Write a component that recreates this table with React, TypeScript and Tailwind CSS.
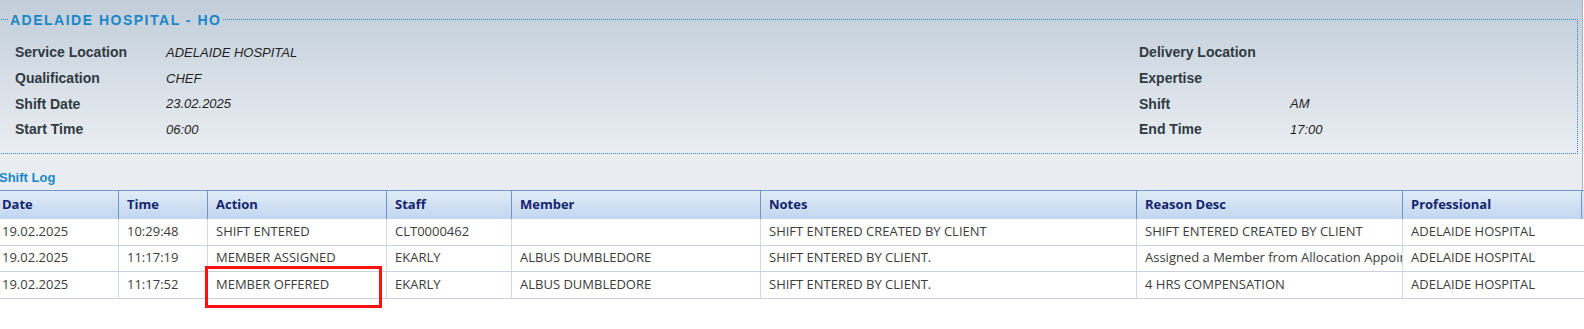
import React from "react";

const cols = [
  { name: "Date", w: "w-[125px]" },
  { name: "Time", w: "w-[89px]" },
  { name: "Action", w: "w-[179px]" },
  { name: "Staff", w: "w-[125px]" },
  { name: "Member", w: "w-[249px]" },
  { name: "Notes", w: "w-[376px]" },
  { name: "Reason Desc", w: "w-[266px]" },
  { name: "Professional", w: "w-[179px]" },
];

const rows = [
  ["19.02.2025", "10:29:48", "SHIFT ENTERED", "CLT0000462", "", "SHIFT ENTERED CREATED BY CLIENT", "SHIFT ENTERED CREATED BY CLIENT", "ADELAIDE HOSPITAL"],
  ["19.02.2025", "11:17:19", "MEMBER ASSIGNED", "EKARLY", "ALBUS DUMBLEDORE", "SHIFT ENTERED BY CLIENT.", "Assigned a Member from Allocation Appointment", "ADELAIDE HOSPITAL"],
  ["19.02.2025", "11:17:52", "MEMBER OFFERED", "EKARLY", "ALBUS DUMBLEDORE", "SHIFT ENTERED BY CLIENT.", "4 HRS COMPENSATION", "ADELAIDE HOSPITAL"],
];

const details: [string, string, string, string][] = [
  ["Service Location", "ADELAIDE HOSPITAL", "Delivery Location", ""],
  ["Qualification", "CHEF", "Expertise", ""],
  ["Shift Date", "23.02.2025", "Shift", "AM"],
  ["Start Time", "06:00", "End Time", "17:00"],
];

export default function App() {
  return (
    <div className="relative w-[1584px] h-[329px] overflow-hidden bg-white">
      <div className="ml-[-6px] w-[1590px]">
        <div className="w-[1589px] border-r border-[#a9b2bc] bg-[linear-gradient(to_bottom,#c2ceda_0px,#e9edf2_150px,#e9edf2_100%)] pt-[10px]">
          <fieldset className="ml-[2px] mr-[4px] border border-dotted border-[#2a8ac8] px-[11px] pb-[10px] font-['Liberation_Sans',Arial,sans-serif]">
            <legend className="px-[2px] pt-[2px] text-[14px] leading-[16px] font-bold tracking-[1.5px] text-[#1a87c9]">
              ADELAIDE HOSPITAL - HO
            </legend>
            <div className="pt-[12px] pl-[7px] grid grid-cols-[151px_973px_151px_1fr]">
              {details.map((d, i) => (
                <React.Fragment key={i}>
                  <div className="h-[25.67px] flex items-center text-[14px] font-bold text-[#2f3a42]">{d[0]}</div>
                  <div className="h-[25.67px] flex items-center text-[13px] italic text-[#1f1f1f]">{d[1]}</div>
                  <div className="h-[25.67px] flex items-center text-[14px] font-bold text-[#2f3a42]">{d[2]}</div>
                  <div className="h-[25.67px] flex items-center text-[13px] italic text-[#1f1f1f]">{d[3]}</div>
                </React.Fragment>
              ))}
            </div>
          </fieldset>
          <div className="h-[36px] pt-[16px] pl-[5px] text-[13px] leading-[16px] font-bold text-[#1a87c9] font-['Liberation_Sans',Arial,sans-serif]">
            Shift Log
          </div>
        </div>
        <div className="flex flex-col font-['Open_Sans',sans-serif] text-[13px]">
          <div className="flex h-[29px] border-t border-[#6e96cb] bg-[linear-gradient(to_bottom,#e1ecf8,#c1d6ef)]">
            {cols.map((c) => (
              <div key={c.name} className={`${c.w} shrink-0 flex items-center pl-[8px] border-r border-[#6e96cb] font-bold text-[#13256e]`}>
                {c.name}
              </div>
            ))}
          </div>
          {rows.map((r, ri) => (
            <div key={ri} className={`flex ${ri === 1 ? "h-[26px]" : "h-[27px]"} border-b border-[#c6d2e4]`}>
              {r.map((cell, ci) => (
                <div key={ci} className={`${cols[ci].w} shrink-0 flex items-center pl-[8px] ${ci < 7 ? "border-r border-[#cdd8e8]" : ""} overflow-hidden whitespace-nowrap text-[#3c3c3c]`}>
                  {cell}
                </div>
              ))}
            </div>
          ))}
        </div>
      </div>
      <div className="absolute left-[205px] top-[266px] w-[177px] h-[42px] border-[3px] border-[#ff1010]" />
    </div>
  );
}
